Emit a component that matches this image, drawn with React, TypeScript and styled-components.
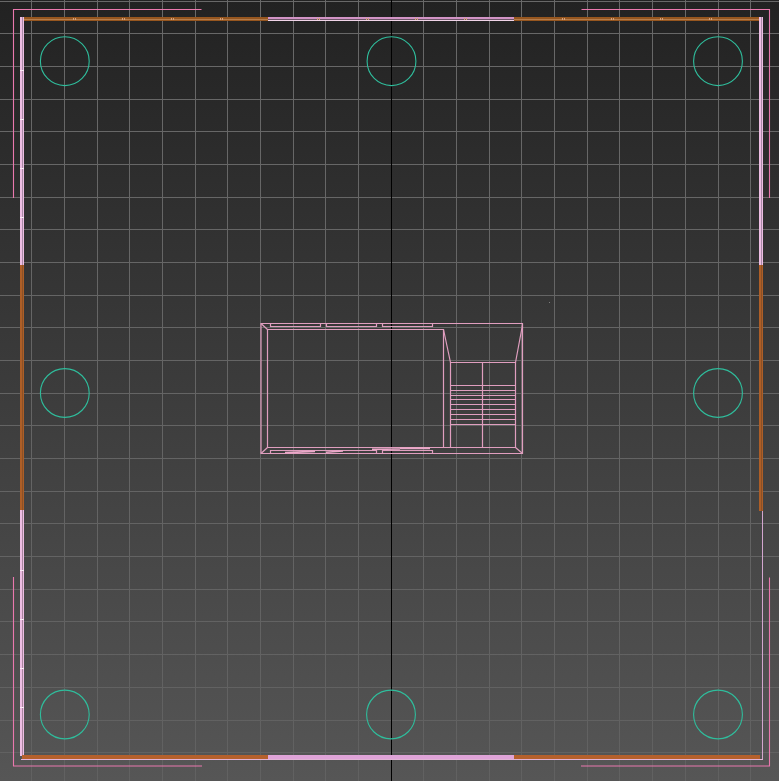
import { FC } from 'react'
import styled, { createGlobalStyle } from 'styled-components'

const GRID_STEP = 32.67
const GRID_X = Array.from({ length: 24 }, (_, i) => Math.floor(391.3 + (i - 12) * GRID_STEP) + 0.5).filter((x) => x > 0)
const GRID_Y = Array.from({ length: 25 }, (_, i) => Math.floor(393.3 + (i - 12) * GRID_STEP) + 0.5)

const COLUMNS = [
  [64.8, 61.2],
  [391.5, 61.2],
  [718, 61.2],
  [64.8, 393],
  [718, 393],
  [64.8, 714.5],
  [391, 714.5],
  [718, 714.5],
]

const STAIR_TREADS = [385, 390, 395, 399, 404, 409, 414, 419, 424]
const TOP_WINDOWS = [270, 326, 382]
const WALL_TICKS = [73, 75, 122, 124, 171, 173, 220, 222, 317, 319, 366, 368, 415, 417, 464, 466, 562, 564, 611, 613, 660, 662, 709, 711]
const SIDE_TICKS = [70, 119, 168, 217, 570, 619, 668, 707]

const GlobalStyle = createGlobalStyle`
  html, body {
    margin: 0;
    padding: 0;
    background: #3b3b3b;
  }
`

const Viewport = styled.main`
  width: 779px;
  height: 781px;
  overflow: hidden;
  background: linear-gradient(180deg, #222222 0%, #565656 100%);
`

const Drawing = styled.svg`
  display: block;
  width: 100%;
  height: 100%;
  shape-rendering: crispEdges;
`

const Outline = styled.path`
  fill: none;
  stroke: #e09ebf;
  stroke-width: 1.2;
  shape-rendering: auto;
`

const Guide = styled.path`
  fill: none;
  stroke: #ea78ae;
  stroke-width: 1.1;
  shape-rendering: auto;
`

const Sketch = styled.path`
  fill: none;
  stroke: #eba9c9;
  stroke-width: 1.6;
  shape-rendering: auto;
`

const Column = styled.circle`
  fill: none;
  stroke: #2fbd9c;
  stroke-width: 1.1;
  shape-rendering: auto;
`

// a wall seen from above: filled band with a thin core line
const WallBand: FC<{ x: number; y: number; w: number; h: number; fill: string; core: string }> = ({
  x,
  y,
  w,
  h,
  fill,
  core,
}) => (
  <>
    <rect x={x} y={y} width={w} height={h} fill={fill} />
    {w > h ? (
      <rect x={x} y={y + 2} width={w} height={1} fill={core} />
    ) : (
      <rect x={x + 2} y={y} width={1} height={h} fill={core} />
    )}
  </>
)

const App: FC = () => {
  return (
    <Viewport>
      <GlobalStyle />
      <Drawing viewBox="0 0 779 781">
        <defs>
          <linearGradient id="gridLine" gradientUnits="userSpaceOnUse" x1="0" y1="0" x2="0" y2="781">
            <stop offset="0" stopColor="#686868" />
            <stop offset="1" stopColor="#616161" />
          </linearGradient>
        </defs>

        {GRID_X.map((x) => (
          <rect key={x} x={x - 0.5} y={0} width={1} height={781} fill="url(#gridLine)" />
        ))}
        {GRID_Y.map((y) => (
          <rect key={y} x={0} y={y - 0.5} width={779} height={1} fill="url(#gridLine)" />
        ))}
        <rect x={391} y={0} width={1} height={781} fill="#000000" />

        {COLUMNS.map(([cx, cy]) => (
          <Column key={`${cx}-${cy}`} cx={cx} cy={cy} r={24.4} />
        ))}

        {/* outer guide lines */}
        <Guide d="M13.5 198V9.5H201.5M581.5 9.5H769.5V198M13.5 577V766H202M581 766H769.5V577.5" />

        {/* top wall */}
        <WallBand x={22} y={17} w={246} h={4} fill="#96561f" core="#b47c4c" />
        <WallBand x={268} y={17} w={246} h={4} fill="#d294c6" core="#6e5568" />
        <rect x={268} y={20} width={246} height={1} fill="#f0d4e8" />
        <WallBand x={514} y={17} w={246} h={4} fill="#96561f" core="#b47c4c" />
        {WALL_TICKS.map((x) => (
          <rect key={x} x={x} y={18} width={1} height={2} fill="#d8a27c" />
        ))}

        {/* left wall */}
        <WallBand x={20} y={17} w={4} h={248} fill="#edbde3" core="#a98aa6" />
        <WallBand x={20} y={265} w={4} h={245} fill="#ad5e27" core="#8c5126" />
        <WallBand x={20} y={510} w={4} h={246} fill="#edbde3" core="#a9859f" />

        {/* right wall */}
        <WallBand x={759} y={17} w={4} h={248} fill="#edbde3" core="#a98aa6" />
        <WallBand x={759} y={265} w={4} h={246} fill="#ad5e27" core="#8c5126" />
        <rect x={762} y={511} width={1} height={248} fill="#d3a6cf" />
        {SIDE_TICKS.map((y) => (
          <rect key={y} x={20} y={y} width={4} height={1} fill="#fbeaf6" />
        ))}

        {/* bottom wall */}
        <rect x={22} y={755} width={246} height={4} fill="#b5602c" />
        <rect x={268} y={755} width={246} height={4} fill="#e0a4d8" />
        <rect x={514} y={755} width={246} height={4} fill="#b5602c" />
        <rect x={21} y={759} width={742} height={1} fill="#e3b4d6" />

        {/* centre block */}
        <Outline d="M261 323.5H522.5V453.5H261ZM267.5 329.5H443.5V447.5H267.5ZM443.5 447.5H515.5V362.5H450.5V447.5M482.5 362.5V447.5" />
        <Outline d="M261 323.5L267.5 329.5M261 453.5L267.5 447.5M515.5 447.5L522.5 453.5M443.5 329.5L450.5 362.5M522.5 325L515.5 362.5" />
        {STAIR_TREADS.map((y) => (
          <Outline key={y} d={`M450.5 ${y + 0.5}H515.5`} />
        ))}
        {TOP_WINDOWS.map((x) => (
          <Outline key={x} d={`M${x + 0.5} 323.5V326.5H${x + 50.5}V323.5`} />
        ))}
        <Outline d="M270.5 453.5V450.5H376.5V453.5M382.5 453.5V450.5H432.5V453.5" />
        <Sketch d="M285 452.6L315 451.4M326 452.2L343 451M372 449.4L400 449M400 448.4L430 448.4" />
        <rect x={549} y={302} width={1} height={1} fill="#7d7d7d" />
      </Drawing>
    </Viewport>
  )
}

export default App
